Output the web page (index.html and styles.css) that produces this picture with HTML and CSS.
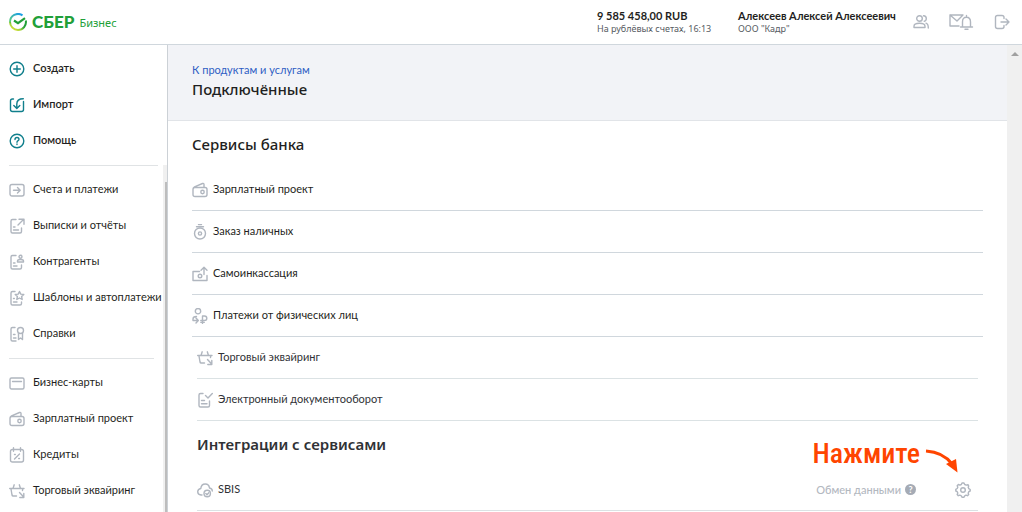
FILE: index.html
```html
<!DOCTYPE html>
<html lang="ru">
<head>
<meta charset="utf-8">
<meta name="viewport" content="width=device-width, initial-scale=1">
<title>СБЕР Бизнес</title>
<link rel="stylesheet" href="styles.css">
</head>
<body>
<svg class="sprite" aria-hidden="true">
  <symbol id="plus" viewBox="0 0 16 16"><circle cx="8" cy="8" r="6.8"/><path d="M8 4.7v6.6M4.7 8h6.6"/></symbol>
  <symbol id="import" viewBox="0 0 16 16"><path d="M4.500 2H3.400Q1.500 2 1.500 4v8.500q0 2 2 2h9q2 0 2-2V4.500M4.800 8.500l3 3 3-3M7.800 11.300V7q0-5.200 6.500-5.200"/></symbol>
  <symbol id="help" viewBox="0 0 16 16"><circle cx="8" cy="8" r="6.800"/><path d="M6 6.500q0-2 2-2t2 1.800q0 1-1.200 1.600-.8.400-.8 1.400M8 11v.6"/></symbol>
  <symbol id="pay" viewBox="0 0 16 16"><rect x="1" y="2.500" width="14" height="11.500" rx="2"/><path d="M4.500 8.250h6.500M8.500 5.500l2.700 2.750L8.500 11"/></symbol>
  <symbol id="report" viewBox="0 0 16 16"><path d="M7 1.500H3.500Q2 1.500 2 3v10.500Q2 15 3.500 15H11q1.500 0 1.500-1.500V10M4.500 9h1.500M4.500 12h5M9 7l5.500-5.500M10 1.200h5v5"/></symbol>
  <symbol id="person-doc" viewBox="0 0 16 16"><path d="M7 1.500H3.500Q2 1.500 2 3v10.500Q2 15 3.500 15H11q1.500 0 1.500-1.500V11M4.500 9H6M4.500 12h3.500"/><circle cx="11.500" cy="2.800" r="1.500"/><path d="M8.500 8V7q0-1.500 3-1.500t3 1.500v1z"/></symbol>
  <symbol id="star-doc" viewBox="0 0 16 16"><path d="M6 1.500H3.500Q2 1.500 2 3v10.500Q2 15 3.500 15H11q1.500 0 1.500-1.500V12M4.500 8.500h.800M4.500 12h3.500M10.500 1.500l1.300 2.600 3 .400-2.200 2 .6 3-2.700-1.500L7.800 9.500l.6-3-2.200-2 3-.400z"/></symbol>
  <symbol id="badge-doc" viewBox="0 0 16 16"><path d="M6 1.500H3.500Q2 1.500 2 3v10.500Q2 15 3.500 15H7M4.500 8.500h1.500M4.500 12h2.500"/><circle cx="11.500" cy="4.500" r="3"/><path d="M9.500 7v6.500l2-1.500 2 1.500V7"/></symbol>
  <symbol id="card" viewBox="0 0 16 16"><rect x="1" y="3" width="14" height="11" rx="1.500"/><path d="M3.500 6.500h9"/></symbol>
  <symbol id="wallet" viewBox="0 0 16 16"><path d="M1 7.500Q1 5.500 3 5.500h10q2 0 2 2v5q0 2-2 2H3q-2 0-2-2zM1 7q0-1.500 1.500-2.200L10.500 1.500q1.500-.5 1.500 1V5"/><circle cx="10.500" cy="10" r="1.700"/></symbol>
  <symbol id="percent" viewBox="0 0 16 16"><path d="M3.500 2.500h9q2 0 2 2v8.500q0 2-2 2h-9q-2 0-2-2V4.500q0-2 2-2zM4.500.8v3.400M11.500.8v3.400M5.500 12l5-5M5.500 7.500h.8M9.700 11.500h.8"/></symbol>
  <symbol id="basket" viewBox="0 0 16 16"><path d="M.7 5.500h14.300M5.200 1.800L4 5.500M10.300 1.800l1.200 3.700M2 6l1 6q.2 1 1.200 1H7.500M13.800 5.500l-.3 2M10.500 9.500l4.200 4.500M14.800 10.500v4h-4"/></symbol>
  <symbol id="bag" viewBox="0 0 16 16"><circle cx="8" cy="9.500" r="5.500"/><circle cx="8" cy="9.500" r="1.600"/><path d="M4.500 2.800h7M6.500.6h3"/></symbol>
  <symbol id="cash-up" viewBox="0 0 16 16"><path d="M7.500 5.500H1v9h14V9.500M12 8.500V1.300M9 4.200l3-3 3 3"/><circle cx="8" cy="10" r="1.800"/></symbol>
  <symbol id="person-pay" viewBox="0 0 16 16"><circle cx="6" cy="3.200" r="2.700"/><path d="M4.500 8.500Q1 8.500 1 11v1.500h5M4 10l2.300 2.500L4 15M10.500 15.500V8h2q2.300 0 2.300 2.200t-2.300 2.200H8.800M8.800 14.200h3.500"/></symbol>
  <symbol id="check-doc" viewBox="0 0 16 16"><path d="M6 1.500H3.500Q2 1.500 2 3v10.500Q2 15 3.500 15H11q1.500 0 1.500-1.500V9M4.500 8.500h3M4.500 11.800h5.500M8.500 3.500l2.500 2.500 4.300-4.500"/></symbol>
  <symbol id="cloud" viewBox="0 0 16 16"><path d="M5 13H4q-3.300-.3-3.300-3.300Q1 7 3.800 6.500 4.200 2 8.300 2q3.700 0 4.200 4 2.800.5 2.800 3"/><circle cx="10.200" cy="11.500" r="3.200"/><path d="M8.800 11.500l1.200 1.200 1.800-2"/></symbol>
  <symbol id="gear" viewBox="0 0 16 16"><circle cx="8" cy="8" r="2.300"/><path d="M6.300 2.500L7 1h2l.7 1.500 1.600.600L13 2.700 13.700 4l-.5 1.300.6 1.300L15.200 7.500v1.500l-1.400.7-.6 1.500.5 1.300L12.500 13.700l-1.500-.5-1.300.6L9 15.200H7l-.7-1.400-1.500-.6-1.500.5L2.200 12.500l.6-1.500-.6-1.300L.8 9V7.300l1.400-.8.6-1.300L2.200 3.800l1.200-1.300 1.500.6z"/></symbol>
</svg>

<header class="topbar">
  <a class="brand" href="#" aria-label="СБЕР Бизнес">
    <svg class="brand-mark" viewBox="0 0 18 18" aria-hidden="true">
      <defs><linearGradient id="ring" x1="0" y1="1" x2="1" y2="0"><stop offset="0" stop-color="#f4e52a"/><stop offset=".3" stop-color="#a9d53a"/><stop offset=".6" stop-color="#21a038"/><stop offset="1" stop-color="#21a038"/></linearGradient><linearGradient id="arc" x1="0" y1="1" x2="1" y2="0"><stop offset="0" stop-color="#62cf79"/><stop offset="1" stop-color="#149bef"/></linearGradient></defs>
      <path d="M16.800 7.500A8 8 0 0 1 9 17A8 8 0 0 1 1 9" fill="none" stroke="url(#ring)" stroke-width="2"/>
      <path d="M1 9A8 8 0 0 1 13.500 2.400" fill="none" stroke="url(#arc)" stroke-width="2"/>
      <path d="M5 7.500l4 2.600L16 5.200" fill="none" stroke="#21a038" stroke-width="2.200"/>
    </svg>
    <span class="brand-name">СБЕР</span><span class="brand-sub">Бизнес</span>
  </a>
  <div class="account"><strong>9 585 458,00 RUB</strong><span>На рублёвых счетах, 16:13</span></div>
  <div class="user"><strong>Алексеев Алексей Алексеевич</strong><span>ООО "Кадр"</span></div>
  <div class="tools">
    <button aria-label="Пользователи"><svg class="icon" viewBox="0 0 16 16"><circle cx="6.500" cy="4.500" r="2.800"/><path d="M1 13.500v-1.300q0-3 5.500-3t5.500 3v1.300zM10.500 1.800q2.800.3 2.800 2.700t-2 2.800M13 9.200q2.300.7 2.300 4.800"/></svg></button>
    <button aria-label="Сообщения и уведомления"><svg class="icon icon-wide" viewBox="0 0 25 16"><path d="M10 12H1V1h13M1 1l7 6 6-6M11.500 13h12M13.500 13V8q0-4.800 4-4.800t4 4.800v5M17.500 3V1.500M16 15.200h3"/></svg></button>
    <button aria-label="Выйти"><svg class="icon" viewBox="0 0 16 16"><path d="M10 4.500V3.500Q10 1.500 8 1.500H3.500q-2 0-2 2v9q0 2 2 2H8q2 0 2-2v-1M7 8h8M12 5l3 3-3 3"/></svg></button>
  </div>
</header>

<div class="shell">
  <aside class="sidebar">
    <nav class="menu menu-main">
      <a href="#"><svg class="icon"><use href="#plus"/></svg><span>Создать</span></a>
      <a href="#"><svg class="icon"><use href="#import"/></svg><span>Импорт</span></a>
      <a href="#"><svg class="icon"><use href="#help"/></svg><span>Помощь</span></a>
    </nav>
    <div class="menu-scroll">
      <div class="menu-lists">
        <nav class="menu">
          <a href="#"><svg class="icon"><use href="#pay"/></svg><span>Счета и платежи</span></a>
          <a href="#"><svg class="icon"><use href="#report"/></svg><span>Выписки и отчёты</span></a>
          <a href="#"><svg class="icon"><use href="#person-doc"/></svg><span>Контрагенты</span></a>
          <a href="#"><svg class="icon"><use href="#star-doc"/></svg><span>Шаблоны и автоплатежи</span></a>
          <a href="#"><svg class="icon"><use href="#badge-doc"/></svg><span>Справки</span></a>
        </nav>
        <nav class="menu menu-products">
          <a href="#"><svg class="icon"><use href="#card"/></svg><span>Бизнес-карты</span></a>
          <a href="#"><svg class="icon"><use href="#wallet"/></svg><span>Зарплатный проект</span></a>
          <a href="#"><svg class="icon"><use href="#percent"/></svg><span>Кредиты</span></a>
          <a href="#"><svg class="icon"><use href="#basket"/></svg><span>Торговый эквайринг</span></a>
        </nav>
      </div>
      <div class="menu-track"><div class="menu-thumb"></div></div>
    </div>
  </aside>

  <main class="content">
    <div class="page-head">
      <a href="#">К продуктам и услугам</a>
      <h1>Подключённые</h1>
    </div>
    <section class="services">
      <h2>Сервисы банка</h2>
      <ul class="rows">
        <li><svg class="icon"><use href="#wallet"/></svg><span>Зарплатный проект</span></li>
        <li><svg class="icon"><use href="#bag"/></svg><span>Заказ наличных</span></li>
        <li><svg class="icon"><use href="#cash-up"/></svg><span>Самоинкассация</span></li>
        <li><svg class="icon"><use href="#person-pay"/></svg><span>Платежи от физических лиц</span></li>
      </ul>
      <div class="inset">
        <ul class="rows">
          <li><svg class="icon"><use href="#basket"/></svg><span>Торговый эквайринг</span></li>
          <li><svg class="icon"><use href="#check-doc"/></svg><span>Электронный документооборот</span></li>
        </ul>
        <h2>Интеграции с сервисами</h2>
        <ul class="rows">
          <li><svg class="icon"><use href="#cloud"/></svg><span>SBIS</span>
            <div class="exchange">Обмен данными <b class="hint">?</b></div>
            <button class="settings" aria-label="Настройки"><svg class="icon"><use href="#gear"/></svg></button>
            <div class="callout">Нажмите<svg class="arrow" viewBox="0 0 36 26" aria-hidden="true"><path d="M2 3Q19 4 28 16" fill="none" stroke="#ff4500" stroke-width="3"/><path d="M22 16l10-5 1.500 13.500z" fill="#ff4500"/></svg></div>
          </li>
        </ul>
      </div>
    </section>
  </main>
  <div class="scrollbar"><button aria-label="Прокрутить вверх"></button></div>
</div>
</body>
</html>
```

FILE: styles.css
```css
* { box-sizing: border-box; }
body {
  margin: 0;
  height: 100vh;
  display: flex;
  flex-direction: column;
  overflow: hidden;
  background: #fff;
  color: #1f1f22;
  font: 11px/16px Lato, "Noto Sans", sans-serif;
}
a { color: inherit; text-decoration: none; }
button { padding: 0; border: 0; background: none; display: flex; }
h1, h2, ul { margin: 0; padding: 0; }
ul { list-style: none; }
.sprite { position: absolute; width: 0; height: 0; }
.icon {
  width: 16px;
  height: 16px;
  flex: none;
  fill: none;
  stroke: #b0b6bf;
  stroke-width: 1.4;
  stroke-linecap: round;
  stroke-linejoin: round;
}
.icon-wide { width: 25px; }

.topbar {
  flex: none;
  height: 45px;
  display: flex;
  align-items: center;
  padding: 0 12px 0 9px;
  border-bottom: 1px solid #d0d7dd;
}
.brand { display: flex; align-items: center; margin-right: auto; color: #21a038; font-family: "Noto Sans", sans-serif; }
.brand-mark { width: 18px; height: 18px; margin-right: 5px; }
.brand-name { font-family: Lato, sans-serif; font-size: 17px; font-weight: 900; margin-right: 5px; }
.brand-sub { font-size: 11px; padding-top: 2px; }
.account, .user {
  display: flex;
  flex-direction: column;
  font: 9px/13px "Noto Sans", sans-serif;
  color: #565b62;
}
.account { width: 141px; }
.user { width: 175px; }
.account strong, .user strong { color: #1f1f22; font-family: Lato, sans-serif; font-size: 11px; font-weight: 700; }
.tools { display: flex; align-items: center; gap: 20px; }

.shell { flex: 1; min-height: 0; display: flex; }
.sidebar {
  flex: none;
  width: 168px;
  display: flex;
  flex-direction: column;
  border-right: 1px solid #ccd1d6;
}
.menu { display: flex; flex-direction: column; padding: 6px 0; }
.menu a { display: flex; align-items: center; gap: 8px; height: 36px; padding-left: 9px; white-space: nowrap; }
.menu span, .rows span { padding-bottom: 2px; }
.menu-main { flex: none; font-weight: 600; }
.menu-main .icon { stroke: #107f8c; }
.menu-scroll { flex: 1; min-height: 0; display: flex; overflow: hidden; }
.menu-lists { flex: 1; min-width: 0; }
.menu-lists::before,
.menu-products::before {
  content: "";
  display: block;
  height: 1px;
  margin-left: 9px;
  margin-right: 5px;
  background: #e0e3e5;
}
.menu-lists .menu-products { padding-top: 0; }
.menu-products::before { margin-bottom: 6px; margin-right: 9px; flex: none; }
.menu-track { width: 4px; padding: 17px 0 0 2px; background: #f0f0f0; display: flex; }
.menu-thumb { width: 2px; background: #bdbdbd; }

.content { flex: 1; min-width: 0; overflow: hidden; }
.page-head {
  height: 76px;
  padding: 17px 24px 0;
  background: #f2f3f7;
  border-bottom: 1px solid #e1e4e8;
}
.page-head a { color: #2f5ec4; }
h1, h2 { font-family: "Noto Sans", sans-serif; font-size: 15px; line-height: 22px; font-weight: 500; }
.services { padding: 12px 24px 0; }
.services > h2 { margin-bottom: 14px; }
.rows li {
  position: relative;
  display: flex;
  align-items: center;
  gap: 5px;
  height: 42px;
  border-bottom: 1px solid #d0d7dd;
}
.inset { margin: 0 5px; color: #303236; }
.inset h2 { margin: 12px 0 14px; font-weight: 600; }
.inset .rows li { border-color: #dbe2e4; }
.exchange { display: flex; align-items: center; gap: 4px; margin-left: auto; color: #b3b8bf; font-weight: 500; }
.hint {
  width: 11px;
  height: 11px;
  border-radius: 50%;
  background: #a5abb5;
  color: #fff;
  font-size: 9px;
  line-height: 11px;
  font-weight: 700;
  text-align: center;
}
.settings { margin: 0 7px 0 34px; }
.callout {
  position: absolute;
  right: 18px;
  bottom: 36px;
  display: flex;
  align-items: center;
  gap: 4px;
  color: #ff4500;
  font: 500 28px/40px "Roboto Condensed", "Liberation Sans Narrow", sans-serif;
}
.arrow { width: 36px; height: 26px; margin-top: 14px; }

.scrollbar { flex: none; width: 15px; background: #f0f0f0; display: flex; justify-content: center; align-items: flex-start; padding-top: 7px; }
.scrollbar button { width: 0; border: 4px solid transparent; border-top: 0; border-bottom-color: #a0a0a0; }
```
